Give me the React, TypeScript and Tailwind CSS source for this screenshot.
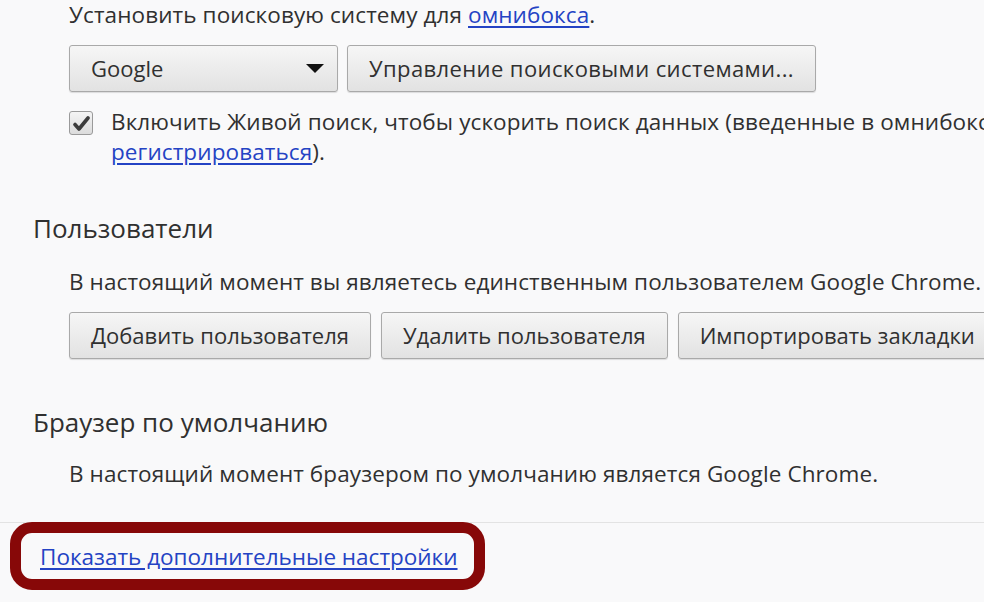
import React from 'react';

// Chrome settings page fragment (Russian UI), zoomed in

function Button({ children, className = '' }: { children: React.ReactNode; className?: string }) {
  return (
    <button
      className={`h-[47px] shrink-0 whitespace-nowrap rounded-[3px] border border-[#a9a9a9] bg-gradient-to-b from-[#f6f6f6] to-[#e2e2e2] px-[21px] text-left text-[22px] text-[#303030] shadow-[0_1px_1px_rgba(0,0,0,0.12)] ${className}`}
    >
      {children}
    </button>
  );
}

export default function App() {
  return (
    <div
      className="relative h-[602px] w-[984px] overflow-hidden bg-[#f9f9fa] text-[#303030]"
      style={{ fontFamily: '"Open Sans", "Noto Sans", sans-serif' }}
    >
      {/* search section */}
      <div className="pl-[69px]">
        <p className="whitespace-nowrap text-[22.5px] leading-[30px] tracking-[0.1px]">
          Установить поисковую систему для{' '}
          <a className="text-[#2443c4] underline underline-offset-[3px]">омнибокса</a>.
        </p>

        <div className="mt-[15px] flex gap-[9px]">
          <Button className="flex w-[269px] items-center justify-between pr-[13px]">
            <span>Google</span>
            <svg width="18" height="9" viewBox="0 0 18 9">
              <path d="M0 0h18L9 9z" fill="#111" />
            </svg>
          </Button>
          <Button className="tracking-[0.4px]">Управление поисковыми системами...</Button>
        </div>

        <div className="mt-[15px] flex items-start gap-[18px]">
          <span className="mt-[4px] flex h-[24px] w-[24px] shrink-0 items-center justify-center rounded-[3px] border border-[#9a9a9a] bg-gradient-to-b from-[#f4f4f4] to-[#dcdcdc]">
            <svg width="17" height="15" viewBox="0 0 17 15">
              <path d="M2 8.5l4 4.5L15 2" fill="none" stroke="#3c3c3c" strokeWidth="3.6" strokeLinecap="round" strokeLinejoin="round" />
            </svg>
          </span>
          <p className="whitespace-nowrap text-[22.5px] leading-[30px] tracking-[0.1px]">
            Включить Живой поиск, чтобы ускорить поиск данных (введенные в омнибоксе данные
            <br />
            <a className="text-[#2443c4] underline underline-offset-[3px]">регистрироваться</a>).
          </p>
        </div>
      </div>

      {/* users */}
      <h2 className="mt-[43px] pl-[33px] text-[26px] leading-[36px]">Пользователи</h2>
      <div className="pl-[69px]">
        <p className="mt-[21px] whitespace-nowrap text-[22.5px] leading-[30px] tracking-[0.1px]">
          В настоящий момент вы являетесь единственным пользователем Google Chrome.
        </p>
        <div className="mt-[15px] flex gap-[10px]">
          <Button>Добавить пользователя</Button>
          <Button>Удалить пользователя</Button>
          <Button>Импортировать закладки</Button>
        </div>
      </div>

      {/* default browser */}
      <h2 className="mt-[45px] pl-[33px] text-[26px] leading-[36px]">Браузер по умолчанию</h2>
      <p className="mt-[19px] whitespace-nowrap pl-[69px] text-[22.5px] leading-[30px] tracking-[0.1px]">
        В настоящий момент браузером по умолчанию является Google Chrome.
      </p>

      {/* footer */}
      <div className="mt-[33px] border-t border-[#e3e3e3] pl-[40px] pt-[19px]">
        <a className="whitespace-nowrap text-[22.5px] leading-[30px] text-[#2443c4] underline underline-offset-[3px]">
          Показать дополнительные настройки
        </a>
      </div>

      {/* highlight annotation */}
      <div className="pointer-events-none absolute left-[10px] top-[522px] h-[68px] w-[475px] rounded-[22px] border-[11px] border-[#870808]" />
    </div>
  );
}
